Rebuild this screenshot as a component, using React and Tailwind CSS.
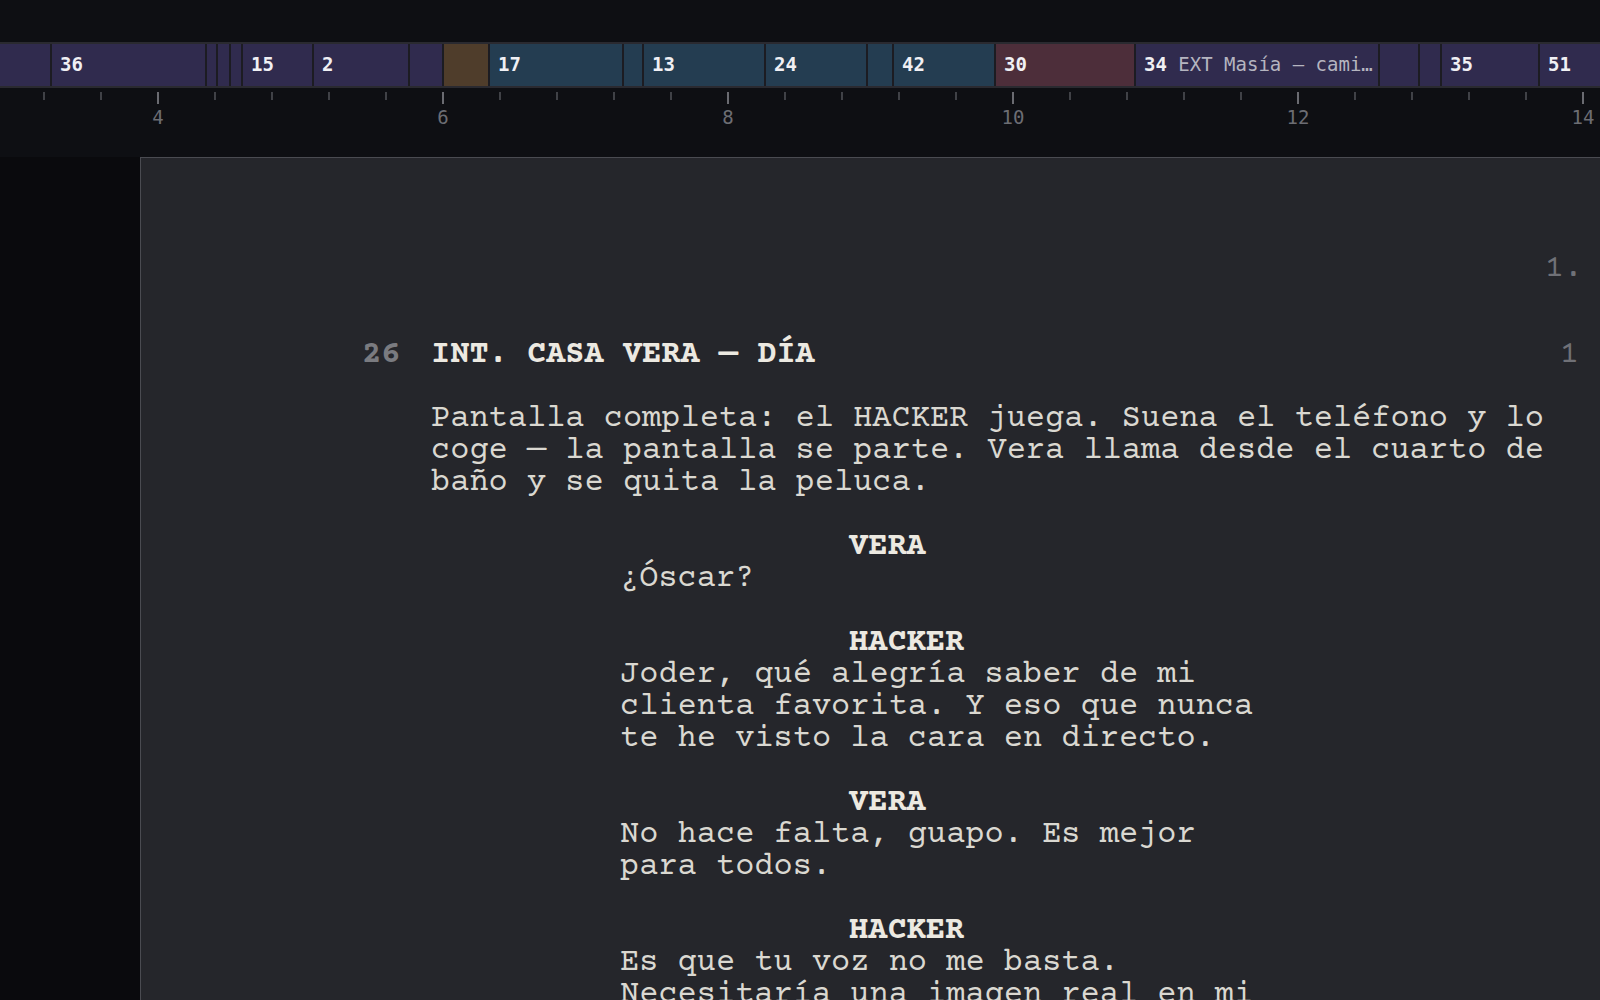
import React from "react";

const segs = [
  { w: 50, c: "p", first: true },
  { w: 155, c: "p", n: "36" },
  { w: 11, c: "p" },
  { w: 13, c: "p" },
  { w: 12, c: "p" },
  { w: 71, c: "p", n: "15" },
  { w: 96, c: "p", n: "2" },
  { w: 34, c: "p" },
  { w: 46, c: "b" },
  { w: 134, c: "t", n: "17" },
  { w: 20, c: "t" },
  { w: 122, c: "t", n: "13" },
  { w: 102, c: "t", n: "24" },
  { w: 26, c: "t" },
  { w: 102, c: "t", n: "42" },
  { w: 140, c: "r", n: "30" },
  { w: 244, c: "p", n: "34", t: "EXT Masía — cami…" },
  { w: 40, c: "p" },
  { w: 22, c: "p" },
  { w: 98, c: "p", n: "35" },
  { w: null, c: "p", n: "51" },
];

const colors = {
  p: "bg-[#302b4e]",
  b: "bg-[#4f3d2b]",
  t: "bg-[#243d51]",
  r: "bg-[#4d2e3a]",
};

function Timeline() {
  return (
    <div className="flex h-[46px] border-y-2 border-[#2a2a30] bg-[#302b4e] font-['DejaVu_Sans_Mono',monospace] text-[19px] leading-none overflow-hidden">
      {segs.map((s, i) => (
        <div
          key={i}
          className={`${colors[s.c]} ${s.first ? "" : "border-l-2 border-[#1c1c22]"} ${s.w ? "shrink-0" : "flex-1"} flex items-center pl-2 pb-[2px] overflow-hidden whitespace-nowrap`}
          style={s.w ? { width: s.w } : undefined}
        >
          {s.n && <span className="font-bold text-[#f0f0f4]">{s.n}</span>}
          {s.t && <span className="text-[#b5b5c0]">&nbsp;{s.t}</span>}
        </div>
      ))}
    </div>
  );
}

function Ruler() {
  const ticks = [];
  for (let k = -2; k <= 25; k++) {
    const x = 158 + k * 57;
    if (x > 1600) break;
    ticks.push({ x, major: k % 5 === 0 });
  }
  const labels = [4, 6, 8, 10, 12, 14].map((v, i) => ({ v, x: 158 + i * 285 }));
  return (
    <div className="relative h-[69px] bg-[#0e0f13]">
      <svg className="absolute left-0 top-0" width="1600" height="20">
        {ticks.map((t, i) => (
          <line
            key={i}
            x1={t.x}
            x2={t.x}
            y1={4}
            y2={t.major ? 16 : 12}
            stroke={t.major ? "#6a6b71" : "#4e4f55"}
            strokeWidth={t.major ? 2 : 1.6}
          />
        ))}
      </svg>
      {labels.map((l) => (
        <span
          key={l.v}
          className="absolute top-[20px] -translate-x-1/2 font-['DejaVu_Sans_Mono',monospace] text-[19px] leading-none text-[#6c6d73]"
          style={{ left: l.x }}
        >
          {l.v}
        </span>
      ))}
    </div>
  );
}

const Line = ({ children, className = "" }) => (
  <div className={`h-[32px] whitespace-pre ${className}`}>{children}</div>
);

function Character({ name }) {
  return <Line className="ml-[418px] font-bold text-[#ece9e1]">{name}</Line>;
}

function Dialogue({ lines }) {
  return (
    <div className="ml-[189px] text-[#dad8d1]">
      {lines.map((l, i) => (
        <Line key={i}>{l}</Line>
      ))}
    </div>
  );
}

function Page() {
  return (
    <div className="flex-1 bg-[#25262b] border-l border-t border-[#4a4b51] font-['Courier_Prime','Nimbus_Mono_PS','FreeMono','Courier_New','Liberation_Mono',monospace] text-[32px] leading-[32px] overflow-hidden">
      <div className="pt-[95px]">
        <Line className="text-right pr-[17px] text-[#707177]">1.</Line>
        <div className="mt-[54px] flex pl-[290px]">
          <div className="-ml-[69px] w-[69px] shrink-0 font-bold text-[#7a7b80]">26</div>
          <div className="font-bold text-[#ece9e1]">INT. CASA VERA — DÍA</div>
          <div className="ml-auto pr-[21px] text-[#707177]">1</div>
        </div>
        <div className="pl-[290px]">
          <div className="mt-[32px] text-[#dad8d1]">
            <Line>Pantalla completa: el HACKER juega. Suena el teléfono y lo</Line>
            <Line>coge — la pantalla se parte. Vera llama desde el cuarto de</Line>
            <Line>baño y se quita la peluca.</Line>
          </div>
          <div className="mt-[32px]">
            <Character name="VERA" />
            <Dialogue lines={["¿Óscar?"]} />
          </div>
          <div className="mt-[32px]">
            <Character name="HACKER" />
            <Dialogue
              lines={[
                "Joder, qué alegría saber de mi",
                "clienta favorita. Y eso que nunca",
                "te he visto la cara en directo.",
              ]}
            />
          </div>
          <div className="mt-[32px]">
            <Character name="VERA" />
            <Dialogue lines={["No hace falta, guapo. Es mejor", "para todos."]} />
          </div>
          <div className="mt-[32px]">
            <Character name="HACKER" />
            <Dialogue
              lines={["Es que tu voz no me basta.", "Necesitaría una imagen real en mi"]}
            />
          </div>
        </div>
      </div>
    </div>
  );
}

export default function App() {
  return (
    <div className="w-[1600px] h-[1000px] overflow-hidden bg-[#0e0f13] flex flex-col">
      <div className="h-[42px] shrink-0 bg-[#0e0f13]" />
      <Timeline />
      <Ruler />
      <div className="flex flex-1 min-h-0">
        <div className="w-[140px] shrink-0 bg-[#0a0a0d]" />
        <Page />
      </div>
    </div>
  );
}
